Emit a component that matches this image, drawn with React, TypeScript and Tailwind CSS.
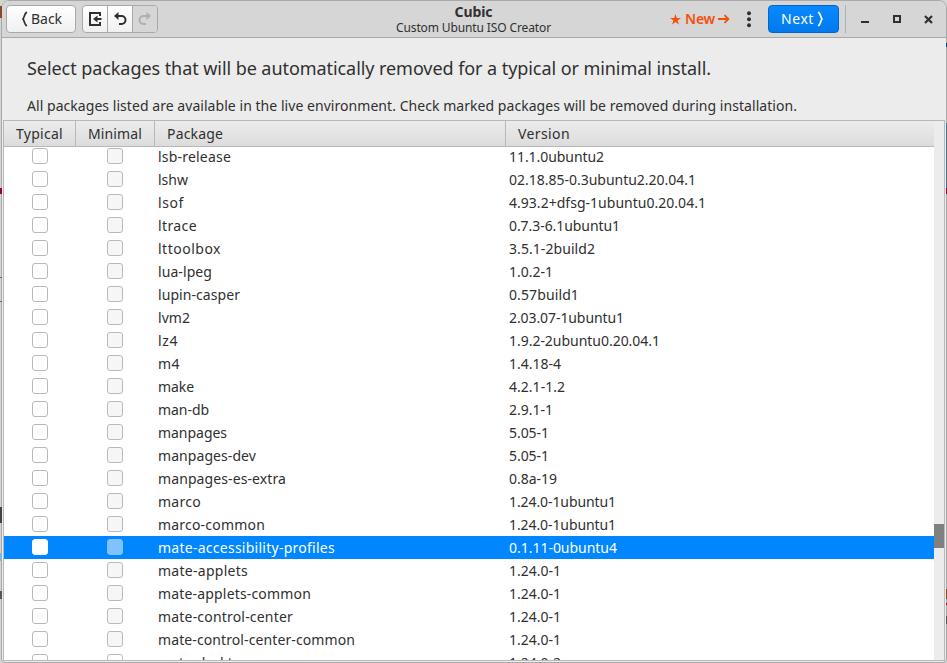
import { useLayoutEffect, useRef, useState } from 'react';

type FitProps = { text: string; width: number; className?: string };

// Spreads a label's letters so that it takes exactly the given width.
function Fit({ text, width, className = '' }: FitProps) {
  const ref = useRef<HTMLSpanElement>(null);
  const [spacing, setSpacing] = useState(0);
  useLayoutEffect(() => {
    const natural = ref.current!.getBoundingClientRect().width;
    setSpacing((width - natural) / text.length);
  }, []);
  return (
    <span ref={ref} className={'inline-block whitespace-pre ' + className} style={{ letterSpacing: spacing }}>
      {text}
    </span>
  );
}

const rows: [string, number, string, number][] = [
  ['lsb-release', 73, '11.1.0ubuntu2', 95],
  ['lshw', 30, '02.18.85-0.3ubuntu2.20.04.1', 187],
  ['lsof', 26, '4.93.2+dfsg-1ubuntu0.20.04.1', 197],
  ['ltrace', 39, '0.7.3-6.1ubuntu1', 111],
  ['lttoolbox', 63, '3.5.1-2build2', 86],
  ['lua-lpeg', 54, '1.0.2-1', 44],
  ['lupin-casper', 82, '0.57build1', 70],
  ['lvm2', 32, '2.03.07-1ubuntu1', 115],
  ['lz4', 20, '1.9.2-2ubuntu0.20.04.1', 151],
  ['m4', 22, '1.4.18-4', 52],
  ['make', 36, '4.2.1-1.2', 56],
  ['man-db', 51, '2.9.1-1', 44],
  ['manpages', 69, '5.05-1', 40],
  ['manpages-dev', 98, '5.05-1', 40],
  ['manpages-es-extra', 128, '0.8a-19', 48],
  ['marco', 43, '1.24.0-1ubuntu1', 107],
  ['marco-common', 107, '1.24.0-1ubuntu1', 107],
  ['mate-accessibility-profiles', 177, '0.1.11-0ubuntu4', 108],
  ['mate-applets', 90, '1.24.0-1', 52],
  ['mate-applets-common', 153, '1.24.0-1', 52],
  ['mate-control-center', 135, '1.24.0-1', 52],
  ['mate-control-center-common', 197, '1.24.0-1', 52],
  ['mate-desktop', 92, '1.24.0-2', 52],
];
const selected = 17;

function Header() {
  return (
    <header className="flex h-[37px] shrink-0 items-start border-b border-[#a9a9a9] bg-[#d6d6d6] pt-1 pl-1">
      <button className="flex h-7 w-[70px] items-center rounded border border-[#a9a9a9] bg-linear-to-b from-white to-[#f0f0f0] pl-[14px]">
        <svg width="7" height="16" viewBox="0 0 7 16" fill="none" stroke="#303030" strokeWidth="1.7"><path d="M5.8 1 C3 3.5 4 5 2 8 C4 11 3 12.5 5.8 15" /></svg>
        <Fit text="Back" width={31} className="mb-[2px] ml-[3px] text-[14px]" />
      </button>
      <div className="ml-1.5 flex h-7 w-[76px] overflow-hidden rounded border border-[#a9a9a9] bg-linear-to-b from-white to-[#f0f0f0]">
        <div className="flex w-[25px] items-center justify-center border-r border-[#a9a9a9]">
          <svg width="16" height="16" viewBox="0 0 16 16" fill="none" stroke="#303030" strokeWidth="2"><path d="M13 5V2H3v12h10v-3" /><path d="M14.5 8H9" /><path d="M10.5 4.5v7L6 8z" fill="#303030" stroke="none" /></svg>
        </div>
        <div className="flex w-[25px] items-center justify-center border-r border-[#a9a9a9]">
          <svg width="16" height="16" viewBox="0 0 16 16" fill="none" stroke="#303030" strokeWidth="2"><path d="M4 5h5.5a4 4 0 0 1 0 8H7" /><path d="M6.5 1v8L2 5z" fill="#303030" stroke="none" /></svg>
        </div>
        <div className="flex flex-1 items-center justify-center bg-[#d6d6d6]">
          <svg width="16" height="16" viewBox="0 0 16 16" fill="none" stroke="#b0b0b0" strokeWidth="2"><path d="M11 5H6.5a4 4 0 0 0 0 8H9" /><path d="M9.5 1v8L14 5z" fill="#b0b0b0" stroke="none" /></svg>
        </div>
      </div>
      <div className="-mt-px ml-[238px] flex w-[155px] flex-col items-center">
        <Fit text="Cubic" width={38} className="text-[14px] leading-4 font-bold" />
        <Fit text="Custom Ubuntu ISO Creator" width={155} className="text-[12px] leading-4" />
      </div>
      <div className="ml-[119px] flex h-7 items-center text-[#f4500c]">
        <svg width="11" height="11" viewBox="0 0 11 11" fill="currentColor"><path d="M5.5 0 6.8 3.9H11L7.6 6.4 8.9 10.5 5.5 8 2.1 10.5 3.4 6.4 0 3.9h4.2z" /></svg>
        <Fit text="New" width={30} className="mb-[2px] ml-1 text-[14px] font-semibold" />
        <svg className="ml-[3px]" width="12" height="10" viewBox="0 0 12 10" fill="none" stroke="currentColor" strokeWidth="1.8"><path d="M0 5h10M6.5 1.2 10.4 5 6.5 8.8" /></svg>
      </div>
      <svg className="mt-1.5 ml-[17px]" width="4" height="17" fill="#303030"><circle cx="2" cy="2.2" r="2" /><circle cx="2" cy="8.2" r="2" /><circle cx="2" cy="14.2" r="2" /></svg>
      <button className="ml-[17px] flex h-7 w-[71px] items-center rounded border border-[#0066c8] bg-linear-to-b from-[#0a88ff] to-[#007aee] pl-3 text-white">
        <Fit text="Next" width={33} className="mb-[2px] text-[14px]" />
        <svg className="ml-[3px]" width="7" height="16" viewBox="0 0 7 16" fill="none" stroke="white" strokeWidth="1.7"><path d="M1.2 1 C4 3.5 3 5 5 8 C3 11 4 12.5 1.2 15" /></svg>
      </button>
      <div className="ml-1.5 h-7 w-px bg-[#b0b0b0]" />
      <svg className="mt-2 ml-[15px]" width="76" height="14" fill="none" stroke="#303030" strokeWidth="2"><path d="M0 9h8" /><path d="M33 3h6v6h-6z" /><path d="m64 3 7 7m0-7-7 7" strokeWidth="2.2" /></svg>
    </header>
  );
}

// Slivers of the windows behind that show past the frame.
function Backdrop() {
  return (
    <>
      <div className="absolute top-[6px] left-0 h-3 w-0.5 bg-[#8a4a2a]" />
      <div className="absolute top-[188px] left-0 h-1.5 w-0.5 bg-[#a00038]" />
      <div className="absolute top-[277px] left-0 h-px w-0.5 bg-[#666666]" />
      <div className="absolute top-[301px] left-0 h-px w-0.5 bg-[#666666]" />
      <div className="absolute top-[507px] left-0 h-4 w-0.5 bg-[#444444]" />
      <div className="absolute top-[553px] left-0 h-2 w-0.5 bg-[#7ab8e0]" />
      <div className="absolute top-[591px] left-0 h-2 w-0.5 bg-[#555555]" />
      <div className="absolute top-[43px] right-0 h-1 w-px bg-[#10407a]" />
      <div className="absolute top-[123px] right-0 h-[65px] w-px bg-[#4a7590]" />
      <div className="absolute top-[188px] right-0 h-1.5 w-px bg-[#a00038]" />
      <div className="absolute top-[589px] right-0 h-2.5 w-px bg-[#8a4a20]" />
      <div className="absolute top-[603px] right-0 h-0.5 w-px bg-[#cc0022]" />
      <div className="absolute top-[616px] right-0 h-2 w-px bg-[#555555]" />
    </>
  );
}

export default function App() {
  return (
    <div className="relative flex h-[663px] w-[947px] flex-col overflow-hidden bg-[#d4d4d4] font-['Noto_Sans','Open_Sans',sans-serif] text-[#303030]">
      <div className="ml-px flex h-[663px] shrink-0 flex-col overflow-hidden rounded-t-lg rounded-b border border-[#a9a9a9] bg-[#ececec]">
        <Header />
        <div className="flex h-[82px] shrink-0 flex-col items-start pl-[25px]">
          <Fit text="Select packages that will be automatically removed for a typical or minimal install." width={684} className="mt-[17px] text-[18px] leading-[26px]" />
          <Fit text="All packages listed are available in the live environment. Check marked packages will be removed during installation." width={770} className="mt-[15px] text-[14px] leading-5" />
        </div>
        <div className="mx-px flex h-[541px] shrink-0 overflow-hidden border border-[#b8b8b8]">
          <div className="flex w-[930px] shrink-0 flex-col bg-white">
            <div className="flex h-[26px] shrink-0 items-center border-b border-[#b8b8b8] bg-linear-to-b from-[#ececec] to-[#dcdcdc] text-[14px]">
              <div className="flex h-full w-[72px] items-center border-r border-[#b8b8b8] pl-3"><Fit text="Typical" width={47} /></div>
              <div className="flex h-full w-[79px] items-center border-r border-[#b8b8b8] pl-3"><Fit text="Minimal" width={54} /></div>
              <div className="flex h-full w-[351px] items-center border-r border-[#b8b8b8] pl-3"><Fit text="Package" width={56} /></div>
              <div className="pl-3"><Fit text="Version" width={52} /></div>
            </div>
            <div className="-mt-[2px] flex flex-col text-[14px]">
              {rows.map(([name, nameWidth, version, versionWidth], i) => {
                const on = i === selected;
                const last = i === rows.length - 1;
                return (
                  <div key={name} className={'flex h-[23px] shrink-0 items-center ' + (on ? 'bg-[#0086ff] text-white' : '')}>
                    <div className={'mb-px ml-7 size-4 rounded-[3px] border bg-white ' + (on ? 'border-white' : 'border-[#bababa]')} />
                    <div className={'mb-px ml-[59px] size-4 rounded-[3px] border ' + (on ? 'border-[#80c2ff] bg-[#80c2ff]' : last ? 'border-[#bababa] bg-white' : 'border-[#bababa] bg-[#f6f6f6]')} />
                    <div className="ml-[35px] w-[351px] leading-[23px]"><Fit text={name} width={nameWidth} /></div>
                    <div className="leading-[23px]"><Fit text={version} width={versionWidth} /></div>
                  </div>
                );
              })}
            </div>
          </div>
          <div className="flex-1 bg-[#ececec] pt-[403px]">
            <div className="h-6 bg-[#808080]" />
          </div>
        </div>
      </div>
      <Backdrop />
    </div>
  );
}
